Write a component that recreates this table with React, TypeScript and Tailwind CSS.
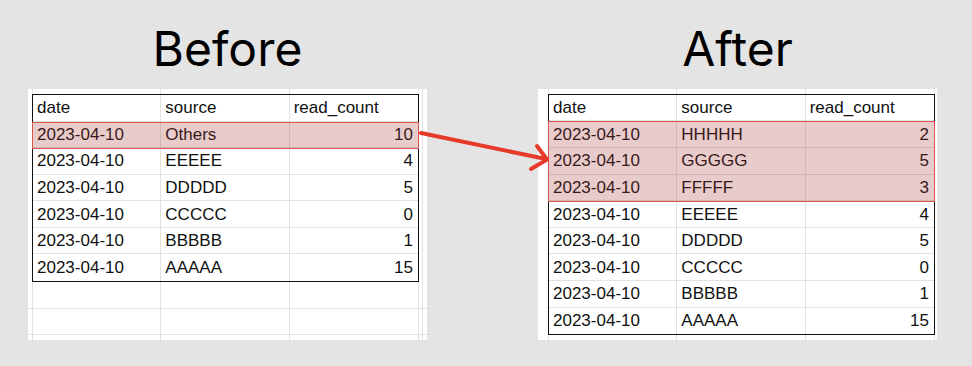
import React from 'react';

type Row = [string, string, number];

const beforeRows: Row[] = [
  ['2023-04-10', 'Others', 10],
  ['2023-04-10', 'EEEEE', 4],
  ['2023-04-10', 'DDDDD', 5],
  ['2023-04-10', 'CCCCC', 0],
  ['2023-04-10', 'BBBBB', 1],
  ['2023-04-10', 'AAAAA', 15],
];

const afterRows: Row[] = [
  ['2023-04-10', 'HHHHH', 2],
  ['2023-04-10', 'GGGGG', 5],
  ['2023-04-10', 'FFFFF', 3],
  ['2023-04-10', 'EEEEE', 4],
  ['2023-04-10', 'DDDDD', 5],
  ['2023-04-10', 'CCCCC', 0],
  ['2023-04-10', 'BBBBB', 1],
  ['2023-04-10', 'AAAAA', 15],
];

const cellText = "font-['Liberation_Sans',Arial,sans-serif] text-[17px] text-[#111] leading-none";

// thin stub column beside the table, keeps the sheet gridlines going
function Stub({ rows, width, line }: { rows: number; width: string; line?: boolean }) {
  return (
    <div className={`flex flex-col ${width}`}>
      <div className={`h-px ${line ? 'border-r border-[#e2e2e2]' : ''}`} />
      {Array.from({ length: rows }).map((_, i) => (
        <div key={i} className={`h-[26.6px] border-b border-[#e2e2e2] ${line ? 'border-r' : ''}`} />
      ))}
      <div className={`flex-1 ${line ? 'border-r border-[#e2e2e2]' : ''}`} />
    </div>
  );
}

function EmptyRow({ h, left, right, bottom = true }: { h: string; left: string; right: React.ReactNode; bottom?: boolean }) {
  return (
    <div className={`flex ${h} ${bottom ? 'border-b border-[#e2e2e2]' : ''}`}>
      <div className={left} />
      <div className="w-[387px] grid grid-cols-3">
        <div className="border-l border-r border-[#e2e2e2]" />
        <div className="border-r border-[#e2e2e2]" />
        <div className="border-r border-[#e2e2e2]" />
      </div>
      {right}
    </div>
  );
}

function Table({ rows, highlight }: { rows: Row[]; highlight: number }) {
  return (
    <div className="relative w-[387px] border border-[#111] bg-white">
      <div className={`grid grid-cols-3 h-[26.6px] border-b border-[#e2e2e2] ${cellText}`}>
        <div className="flex items-center pl-[4px] border-r border-[#e2e2e2]">date</div>
        <div className="flex items-center pl-[4px] border-r border-[#e2e2e2]">source</div>
        <div className="flex items-center pl-[4px]">read_count</div>
      </div>
      {rows.map((r, i) => (
        <div
          key={i}
          className={`grid grid-cols-3 h-[26.6px] ${i < rows.length - 1 ? 'border-b border-[#e2e2e2]' : ''} ${cellText}`}
        >
          <div className="flex items-center pl-[4px] border-r border-[#e2e2e2]">{r[0]}</div>
          <div className="flex items-center pl-[4px] border-r border-[#e2e2e2]">{r[1]}</div>
          <div className="flex items-center justify-end pr-[5px]">{r[2]}</div>
        </div>
      ))}
      {/* red highlight box over the grouped rows */}
      <div
        className="absolute left-[-1px] right-[-1px] top-[26.6px] border-[1.5px] border-[#d8564c] bg-[rgba(163,51,51,0.25)] pointer-events-none"
        style={{ height: `${highlight * 26.6 + 1}px` }}
      />
    </div>
  );
}

function Panel({ title, children }: { title: string; children: React.ReactNode }) {
  return (
    <div className="flex flex-col items-center w-[399px]">
      <h1 className="mt-[25px] h-[48px] text-[48px] leading-none font-['Inter',sans-serif] text-black">{title}</h1>
      <div className="mt-[16px] w-[399px] h-[251px] bg-white overflow-hidden flex flex-col">{children}</div>
    </div>
  );
}

export default function App() {
  return (
    <div className="relative w-[972px] h-[366px] bg-[#e4e4e4] flex pl-[28px] gap-[111px]">
      <Panel title="Before">
        <EmptyRow h="h-[5px]" left="w-[4px]" bottom={false} right={<div className="w-[4px] border-r border-[#e2e2e2]" />} />
        <div className="flex">
          <div className="w-[4px]" />
          <Table rows={beforeRows} highlight={1} />
          <div className="w-[4px] border-r border-[#e2e2e2]" />
        </div>
        <EmptyRow h="h-[27px]" left="w-[4px]" right={<div className="w-[4px] border-r border-[#e2e2e2]" />} />
        <EmptyRow h="h-[27px]" left="w-[4px]" right={<div className="w-[4px] border-r border-[#e2e2e2]" />} />
        <EmptyRow h="h-[5px]" left="w-[4px]" bottom={false} right={<div className="w-[4px] border-r border-[#e2e2e2]" />} />
      </Panel>
      <Panel title="After">
        <EmptyRow h="h-[5px]" left="w-[10px]" bottom={false} right={<div className="w-[1px]" />} />
        <div className="flex">
          <div className="w-[10px]" />
          <Table rows={afterRows} highlight={3} />
          <Stub rows={0} width="w-[1px]" />
        </div>
        <EmptyRow h="h-[5px]" left="w-[10px]" bottom={false} right={<div className="w-[1px]" />} />
      </Panel>

      {/* connector arrow */}
      <svg className="absolute inset-0 pointer-events-none" width="972" height="366" viewBox="0 0 972 366">
        <g stroke="#e63a2b" strokeWidth="4" strokeLinecap="round" strokeLinejoin="round" fill="none">
          <path d="M421 133 L546 159" />
          <path d="M537 146 L547 159.5 L531 169" />
        </g>
      </svg>
    </div>
  );
}
